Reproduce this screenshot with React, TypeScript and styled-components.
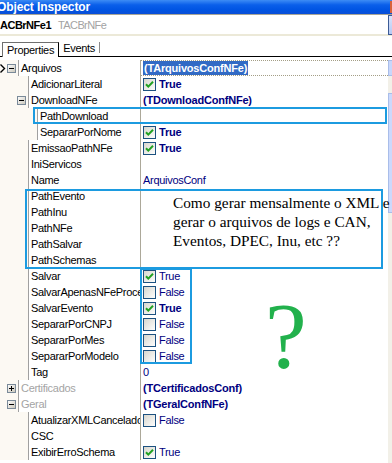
import React from 'react';
import styled, { createGlobalStyle } from 'styled-components';

type Prop = {
    name: string,
    depth: 0 | 1 | 2,
    expand?: '+' | '-',
    value?: string,
    bool?: boolean,
    bold?: boolean,
    category?: boolean,
    selected?: boolean,
}

const LINE_X = [18, 28, 37];

const PROPS: Prop[] = [
    { name: 'Arquivos', depth: 0, expand: '-', value: '(TArquivosConfNFe)', bold: true, selected: true },
    { name: 'AdicionarLiteral', depth: 1, bool: true, bold: true },
    { name: 'DownloadNFe', depth: 1, expand: '-', value: '(TDownloadConfNFe)', bold: true },
    { name: 'PathDownload', depth: 2 },
    { name: 'SepararPorNome', depth: 2, bool: true, bold: true },
    { name: 'EmissaoPathNFe', depth: 1, bool: true, bold: true },
    { name: 'IniServicos', depth: 1 },
    { name: 'Name', depth: 1, value: 'ArquivosConf' },
    { name: 'PathEvento', depth: 1 },
    { name: 'PathInu', depth: 1 },
    { name: 'PathNFe', depth: 1 },
    { name: 'PathSalvar', depth: 1 },
    { name: 'PathSchemas', depth: 1 },
    { name: 'Salvar', depth: 1, bool: true },
    { name: 'SalvarApenasNFeProcessadas', depth: 1, bool: false },
    { name: 'SalvarEvento', depth: 1, bool: true, bold: true },
    { name: 'SepararPorCNPJ', depth: 1, bool: false },
    { name: 'SepararPorMes', depth: 1, bool: false },
    { name: 'SepararPorModelo', depth: 1, bool: false },
    { name: 'Tag', depth: 1, value: '0' },
    { name: 'Certificados', depth: 0, expand: '+', category: true, value: '(TCertificadosConf)', bold: true },
    { name: 'Geral', depth: 0, expand: '-', category: true, value: '(TGeralConfNFe)', bold: true },
    { name: 'AtualizarXMLCancelado', depth: 1, bool: false },
    { name: 'CSC', depth: 1 },
    { name: 'ExibirErroSchema', depth: 1, bool: true },
];

const CheckBox = ({ checked }: { checked: boolean }) => (
    <svg width="13" height="13" viewBox="0 0 13 13" style={{ flex: 'none' }}>
        <defs>
            <linearGradient id="cbfill" x1="0" y1="0" x2="1" y2="1">
                <stop offset="0" stopColor="#d6d5cc" />
                <stop offset="1" stopColor="#ffffff" />
            </linearGradient>
        </defs>
        <rect x="0.5" y="0.5" width="12" height="12" fill="url(#cbfill)" stroke="#1c5180" />
        {checked && (
            <path d="M3 6.2 L5.3 8.6 L10 3.8" fill="none" stroke="#21a121" strokeWidth="2" />
        )}
    </svg>
);

const ExpandBox = ({ sign }: { sign: '+' | '-' }) => (
    <svg width="9" height="9" viewBox="0 0 9 9" style={{ flex: 'none' }}>
        <defs>
            <linearGradient id="exfill" x1="0" y1="0" x2="1" y2="1">
                <stop offset="0" stopColor="#ffffff" />
                <stop offset="1" stopColor="#c8c5b8" />
            </linearGradient>
        </defs>
        <rect x="0.5" y="0.5" width="8" height="8" fill="url(#exfill)" stroke="#7a8a99" />
        <path d="M2 4.5 H7" stroke="#000" strokeWidth="1" />
        {sign === '+' && <path d="M4.5 2 V7" stroke="#000" strokeWidth="1" />}
    </svg>
);

const RowArrow = () => (
    <svg width="6" height="9" viewBox="0 0 6 9" style={{ flex: 'none' }}>
        <path d="M0.5 0.5 L4.5 4.5 L0.5 8.5" fill="none" stroke="#000" strokeWidth="1.4" />
    </svg>
);

const PropRow = ({ p }: { p: Prop }) => (
    <Row>
        <NameCell>
            <Gutter $width={LINE_X[p.depth]}>
                {p.selected && <RowArrow />}
                {p.expand && <ExpandBox sign={p.expand} />}
            </Gutter>
            <Label $category={p.category}>{p.name}</Label>
        </NameCell>
        <ValueCell $selected={p.selected}>
            {p.bool !== undefined && <CheckBox checked={p.bool} />}
            {p.bool !== undefined && <Value $bold={p.bold}>{p.bool ? 'True' : 'False'}</Value>}
            {p.value && (p.selected
                ? <Highlight>{p.value}</Highlight>
                : <Value $bold={p.bold}>{p.value}</Value>)}
        </ValueCell>
    </Row>
);

export default function App() {
    return (
        <Inspector>
            <GlobalStyle />
            <TitleBar>
                <Title>Object Inspector</Title>
                <CloseEdge />
            </TitleBar>
            <Combo>
                <ComponentName>ACBrNFe1</ComponentName>
                <ComponentType>TACBrNFe</ComponentType>
                <ComboButton />
            </Combo>
            <TabBar>
                <Tab $active>Properties</Tab>
                <Tab>Events</Tab>
            </TabBar>
            <GridArea>
                <Rows>
                    {PROPS.map((p) => <PropRow key={p.name} p={p} />)}
                </Rows>
                <ScrollStrip>
                    <ScrollButton />
                    <ScrollThumb />
                </ScrollStrip>
            </GridArea>

            <Frame $left={33} $top={107} $width={354} $height={17} />
            <Frame $left={25} $top={189} $width={358} $height={80} />
            <Frame $left={140} $top={268} $width={52} $height={96} />
            <Comment>
                Como gerar mensalmente o XML e<br />
                gerar o arquivos de logs e CAN,<br />
                Eventos, DPEC, Inu, etc ??
            </Comment>
            <Question>?</Question>
        </Inspector>
    );
}

const GlobalStyle = createGlobalStyle`
    html, body {
        margin: 0;
        padding: 0;
        background: #ffffff;
    }
    body {
        font-family: "Liberation Sans", Arial, sans-serif;
    }
`;

const Inspector = styled.div`
    position: relative;
    width: 392px;
    height: 463px;
    overflow: hidden;
    display: flex;
    flex-direction: column;
    background: #ffffff;
`;

const TitleBar = styled.div`
    height: 14px;
    flex: none;
    display: flex;
    align-items: center;
    justify-content: space-between;
    background: linear-gradient(#3d8cf5 0%, #0a5fea 35%, #0054e3 70%, #0a4ed6 100%);
    border-bottom: 1px solid #a7a597;
`;

const Title = styled.div`
    margin-left: -3px;
    margin-top: -1px;
    color: #ffffff;
    font-size: 12px;
    font-weight: 700;
    letter-spacing: -0.1px;
    white-space: nowrap;
`;

const CloseEdge = styled.div`
    width: 2px;
    height: 12px;
    background: #d8623c;
`;

const Combo = styled.div`
    height: 19px;
    flex: none;
    display: flex;
    align-items: center;
    background: #ffffff;
    border-bottom: 2px solid #ece9d8;
`;

const ComponentName = styled.span`
    width: 58px;
    font-size: 11px;
    font-weight: 700;
    letter-spacing: -0.5px;
    color: #000000;
`;

const ComponentType = styled.span`
    flex: 1;
    font-size: 11px;
    letter-spacing: -0.6px;
    color: #a3a3a3;
`;

const ComboButton = styled.div`
    width: 3px;
    height: 18px;
    margin-top: 1px;
    border: 1px solid #3c5b96;
    border-right: none;
    background: linear-gradient(#d9e4fb, #b6c9f4);
`;

const TabBar = styled.div`
    height: 20px;
    flex: none;
    display: flex;
    align-items: flex-end;
    padding-left: 2px;
    border-bottom: 1px solid #000000;
    background: #ffffff;
`;

const Tab = styled.div<{ $active?: boolean }>`
    height: ${(p) => (p.$active ? '15px' : '11px')};
    margin-bottom: ${(p) => (p.$active ? '-1px' : '3px')};
    padding: 0 4px;
    display: flex;
    align-items: center;
    font-size: 11px;
    letter-spacing: -0.3px;
    color: #000000;
    background: #ffffff;
    box-sizing: border-box;
    border: ${(p) => (p.$active ? '1px solid #6f6f6f' : 'none')};
    border-right: ${(p) => (p.$active ? '1px solid #000' : '1px solid #8a8a8a')};
    border-bottom: none;
    margin-right: 0;
    ${(p) => !p.$active && 'margin-left: 0px; padding: 0 4px 0 4px; width: 41px; justify-content: flex-start;'}
`;

const GridArea = styled.div`
    flex: 1;
    min-height: 0;
    display: flex;
    padding-top: 3px;
    overflow: hidden;
`;

const Rows = styled.div`
    flex: 1;
    display: flex;
    flex-direction: column;
`;

const Row = styled.div`
    height: 16px;
    flex: none;
    display: flex;
`;

const NameCell = styled.div`
    width: 141px;
    flex: none;
    box-sizing: border-box;
    display: flex;
    border-right: 1px solid #aca899;
`;

const Gutter = styled.div<{ $width: number }>`
    width: ${(p) => p.$width}px;
    flex: none;
    box-sizing: border-box;
    padding-right: 2px;
    display: flex;
    align-items: center;
    justify-content: flex-end;
    background: #fcf9f3;

    & > svg:first-child:not(:last-child) {
        margin-right: auto;
    }
`;

const Label = styled.div<{ $category?: boolean }>`
    flex: 1;
    min-width: 0;
    padding-left: 2px;
    border-left: 1px solid #a0a0a0;
    font-size: 11px;
    line-height: 16px;
    letter-spacing: -0.3px;
    white-space: nowrap;
    overflow: hidden;
    color: ${(p) => (p.$category ? '#a4a4a4' : '#000000')};
`;

const ValueCell = styled.div<{ $selected?: boolean }>`
    flex: 1;
    min-width: 0;
    box-sizing: border-box;
    padding-left: 2px;
    display: flex;
    align-items: center;
    gap: 3px;
    white-space: nowrap;
    border-top: 1px dotted ${(p) => (p.$selected ? '#a49e86' : 'transparent')};
    border-bottom: 1px dotted ${(p) => (p.$selected ? '#a49e86' : 'transparent')};
`;

const Value = styled.span<{ $bold?: boolean }>`
    font-size: 11px;
    font-weight: ${(p) => (p.$bold ? 700 : 400)};
    letter-spacing: ${(p) => (p.$bold ? '-0.2px' : '-0.3px')};
    color: #000080;
`;

const Highlight = styled.span`
    padding: 0 1px;
    font-size: 11px;
    line-height: 14px;
    font-weight: 700;
    letter-spacing: -0.2px;
    color: #ffffff;
    background: #316ac5;
`;

const ScrollStrip = styled.div`
    width: 4px;
    flex: none;
    display: flex;
    flex-direction: column;
    background: #f2f0e8;
`;

const ScrollButton = styled.div`
    height: 16px;
    box-sizing: border-box;
    border: 1px solid #a9bde9;
    border-right: none;
    background: #c8d7fb;
`;

const ScrollThumb = styled.div`
    height: 120px;
    margin-top: 17px;
    box-sizing: border-box;
    border: 1px solid #a9bde9;
    border-right: none;
    background: #cbd9fc;
`;

const Frame = styled.div<{ $left: number, $top: number, $width: number, $height: number }>`
    position: absolute;
    left: ${(p) => p.$left}px;
    top: ${(p) => p.$top}px;
    width: ${(p) => p.$width}px;
    height: ${(p) => p.$height}px;
    box-sizing: border-box;
    border: 2px solid #1c9be0;
    pointer-events: none;
`;

const Comment = styled.div`
    position: absolute;
    left: 173px;
    top: 193px;
    font-family: "Liberation Serif", "Times New Roman", serif;
    font-size: 15.3px;
    line-height: 19px;
    color: #000000;
    white-space: nowrap;
`;

const Question = styled.div`
    position: absolute;
    left: 265px;
    top: 288px;
    font-family: "Liberation Serif", "Times New Roman", serif;
    font-size: 94px;
    line-height: 1;
    color: #22b14c;
`;
